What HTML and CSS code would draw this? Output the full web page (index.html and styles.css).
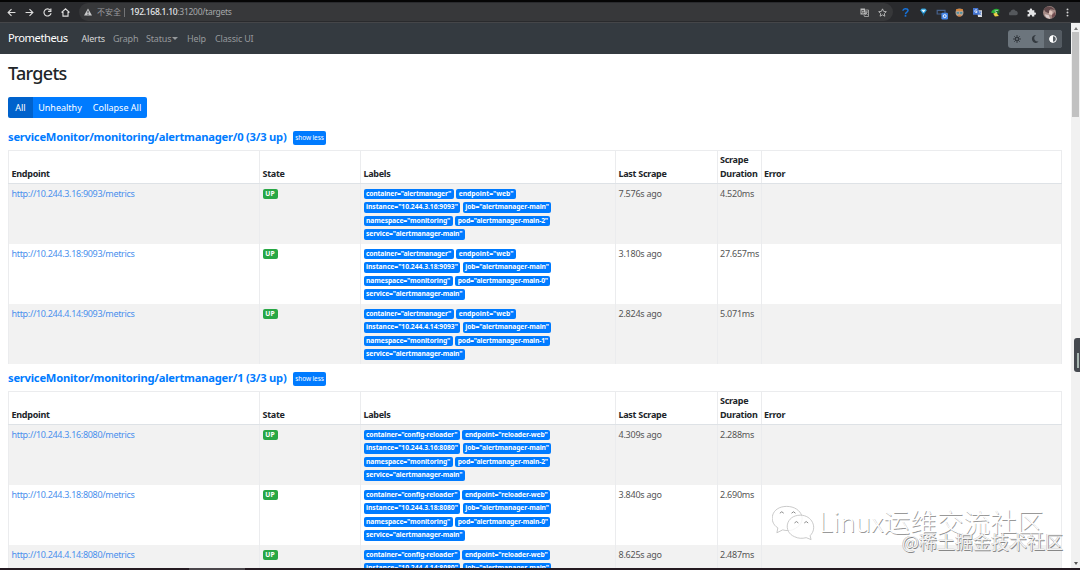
FILE: index.html
```html
<!DOCTYPE html>
<html lang="en">
<head>
<meta charset="utf-8">
<title>Prometheus Targets</title>
<link rel="stylesheet" href="styles.css">
</head>
<body>
<div class="window">
  <header class="browser">
    <svg class="nav-icon" viewBox="0 0 16 16"><path d="M15 8H2M8 2 2 8l6 6"/></svg>
    <svg class="nav-icon" viewBox="0 0 16 16"><path d="M1 8h13M8 2l6 6-6 6"/></svg>
    <svg class="nav-icon" viewBox="0 0 16 16"><path d="M13 4a6.300 6.300 0 1 0 1.300 5M14 1v5H9"/></svg>
    <svg class="nav-icon" viewBox="0 0 16 16"><path d="M1 8 8 1.500 15 8M3.500 7v7.500h9V7"/></svg>
    <div class="address">
      <svg class="warn" viewBox="0 0 16 16"><path fill="#c8c9ca" d="M8 1 16 15H0z"/><path stroke="#3b3c3e" stroke-width="2" d="M8 5.500v5M8 11.700v2"/></svg>
      <span class="insecure">不安全</span><span class="divider"></span>
      <span class="url"><b>192.168.1.10</b>:31200/targets</span>
      <svg class="translate" viewBox="0 0 18 18"><path fill="#bbb" d="M1 1h9l2 12H1z"/><path fill="none" stroke="#444" stroke-width="1.500" d="M8 5H3.500v5H8V8H6"/><path fill="none" stroke="#bbb" stroke-width="1.500" d="M11 4h6v13H9l-1-3M11 8h5M13 7c1 4-1 5-2 6M12 10l3 4"/></svg>
      <svg class="star" viewBox="0 0 16 16"><path d="m8 1.500 2 4.500 4.800.500-3.600 3.300 1 4.800L8 12.200l-4.200 2.400 1-4.800L1.200 6.500 6 6z"/></svg>
    </div>
    <div class="extensions">
      <svg viewBox="0 0 16 16"><path fill="none" stroke="#1673dc" stroke-width="2.600" d="M3.500 5c0-5 9-4.500 9-.500C12.500 7.500 8 7 8 11"/><path fill="#1673dc" d="M6.500 12.500h3v3h-3z"/></svg>
      <svg viewBox="0 0 16 16"><path fill="#269bd8" d="M2 4 5 1h6l3 3-6 8z"/><path fill="#e6f6ff" d="M4 3h8L8 8z"/><path fill="#19618b" d="m6 9 2 6 2-6z"/></svg>
      <svg class="wide" viewBox="0 0 20 20"><path fill="none" stroke="#46618c" stroke-width="2" d="M2 4h13v6H2z"/><rect x="9" y="8" width="11" height="11" rx="2" fill="#4586e8"/><circle cx="14.500" cy="13.500" r="2.500" fill="none" stroke="#fff" stroke-width="1.500"/></svg>
      <svg viewBox="0 0 16 16"><circle cx="8" cy="8" r="7" fill="#b9a08e"/><path fill="#d98536" d="M2 2h12v3H2z"/><path fill="#4d91a4" d="M3 7h4v3H3zM9 7h4v3H9z"/><path fill="#db7d32" d="M5 13h6v2H5z"/></svg>
      <svg viewBox="0 0 16 16"><path fill="#dedfe3" d="M7 4h9v12H9z"/><path fill="#4475d2" d="M0 0h9l3 12H0z"/><path fill="none" stroke="#fff" stroke-width="1.400" d="M7.500 4.500C4-.500 0 9 7 8V6H5"/><path fill="none" stroke="#4475d2" stroke-width="1.400" d="M10 7h5m-2 0c0 3-1 4-2 5m0-3 4 4"/></svg>
      <svg viewBox="0 0 16 16"><path fill="#2aae38" d="M0 8C3 1 10 0 15 3l-4 8z"/><path fill="#e9eef5" d="m6 5 7-1-3 6z"/><path fill="#ead344" d="m4 10 5-2 5 6-7 1z"/><path fill="#176c24" d="m7 6 8-2v6z"/></svg>
      <svg class="cloud" viewBox="0 0 16 16"><path fill="#55585c" d="M3 13a3 3 0 0 1-.500-6C3 2 10 1 11.500 5c5 0 5.500 8 1 8z"/></svg>
      <svg viewBox="0 0 16 16"><path fill="#e4e5e6" d="M1 4h4c-1-4 5-4 4 0h4v4c4-1 4 5 0 4v3H9c0-4-4-4-4 0H1v-4c4 0 4-4 0-4z"/></svg>
      <svg class="avatar" viewBox="0 0 16 16"><circle cx="8" cy="8" r="8" fill="#a78c87"/><path fill="#62494b" d="M1 4C5-2 12 1 15 5L9 4 7 9 3 7z"/><path fill="#e1c6bd" d="m8 5 4 2-1 4-4-1z"/><path fill="#d9cccb" d="m2 10 5 1 2 5-5-2z"/><path fill="#734d50" d="m11 11 4-4v5l-4 3z"/></svg>
      <svg class="dots" viewBox="0 0 16 16"><g fill="#d7d7d7"><circle cx="8" cy="2.500" r="1.700"/><circle cx="8" cy="8" r="1.700"/><circle cx="8" cy="13.500" r="1.700"/></g></svg>
    </div>
  </header>
  <div class="viewport">
    <main class="page">
      <nav class="navbar">
        <a class="brand">Prometheus</a>
        <a class="active">Alerts</a><a class="graph">Graph</a><a class="status">Status<i class="caret"></i></a><a class="help">Help</a><a class="classic">Classic UI</a>
        <div class="themes">
          <span><svg viewBox="0 0 16 16"><path stroke="#343a40" stroke-width="2" d="M8 0v16M0 8h16M2.500 2.500l11 11M13.500 2.500l-11 11"/><circle cx="8" cy="8" r="4.500" fill="#343a40"/><circle cx="8" cy="8" r="2" fill="#6c757d"/></svg></span>
          <span><svg viewBox="0 0 16 16"><path fill="#343a40" d="M10 0C1-.500-1 11 6 15c3 2 7 1 9-2C6 14 4 4 10 0z"/></svg></span>
          <span class="auto"><svg viewBox="0 0 16 16"><circle cx="8" cy="8" r="6.700" fill="none" stroke="#fff" stroke-width="2"/><path fill="#fff" d="M8 1a7 7 0 0 0 0 14z"/></svg></span>
        </div>
      </nav>
      <section class="content">
        <h1>Targets</h1>
        <div class="filters"><button class="all">All</button><button class="unhealthy">Unhealthy</button><button class="collapse">Collapse All</button></div>
        <section class="pool">
          <h2><a>serviceMonitor/monitoring/alertmanager/0 (3/3 up)</a><button>show less</button></h2>
          <table>
            <colgroup><col class="c-endpoint"><col class="c-state"><col class="c-labels"><col class="c-last"><col class="c-duration"><col></colgroup>
            <thead><tr><th>Endpoint</th><th>State</th><th>Labels</th><th>Last Scrape</th><th>Scrape<br>Duration</th><th>Error</th></tr></thead>
            <tbody>
              <tr><td><a>http://10.244.3.16:9093/metrics</a></td><td><span class="up">UP</span></td><td><div class="labels"><div><span>container="alertmanager"</span><span class="short">endpoint="web"</span></div><div><span class="instance">instance="10.244.3.16:9093"</span><span class="job">job="alertmanager-main"</span></div><div><span class="namespace">namespace="monitoring"</span><span>pod="alertmanager-main-2"</span></div><div><span class="service">service="alertmanager-main"</span></div></div></td><td>7.576s ago</td><td>4.520ms</td><td></td></tr>
              <tr><td><a>http://10.244.3.18:9093/metrics</a></td><td><span class="up">UP</span></td><td><div class="labels"><div><span>container="alertmanager"</span><span class="short">endpoint="web"</span></div><div><span class="instance">instance="10.244.3.18:9093"</span><span class="job">job="alertmanager-main"</span></div><div><span class="namespace">namespace="monitoring"</span><span>pod="alertmanager-main-0"</span></div><div><span class="service">service="alertmanager-main"</span></div></div></td><td>3.180s ago</td><td>27.657ms</td><td></td></tr>
              <tr><td><a>http://10.244.4.14:9093/metrics</a></td><td><span class="up">UP</span></td><td><div class="labels"><div><span>container="alertmanager"</span><span class="short">endpoint="web"</span></div><div><span class="instance">instance="10.244.4.14:9093"</span><span class="job">job="alertmanager-main"</span></div><div><span class="namespace">namespace="monitoring"</span><span>pod="alertmanager-main-1"</span></div><div><span class="service">service="alertmanager-main"</span></div></div></td><td>2.824s ago</td><td>5.071ms</td><td></td></tr>
            </tbody>
          </table>
        </section>
        <section class="pool">
          <h2><a>serviceMonitor/monitoring/alertmanager/1 (3/3 up)</a><button>show less</button></h2>
          <table>
            <colgroup><col class="c-endpoint"><col class="c-state"><col class="c-labels"><col class="c-last"><col class="c-duration"><col></colgroup>
            <thead><tr><th>Endpoint</th><th>State</th><th>Labels</th><th>Last Scrape</th><th>Scrape<br>Duration</th><th>Error</th></tr></thead>
            <tbody>
              <tr><td><a>http://10.244.3.16:8080/metrics</a></td><td><span class="up">UP</span></td><td><div class="labels"><div><span class="reloader">container="config-reloader"</span><span class="reloader">endpoint="reloader-web"</span></div><div><span class="instance">instance="10.244.3.16:8080"</span><span class="job">job="alertmanager-main"</span></div><div><span class="namespace">namespace="monitoring"</span><span>pod="alertmanager-main-2"</span></div><div><span class="service">service="alertmanager-main"</span></div></div></td><td>4.309s ago</td><td>2.288ms</td><td></td></tr>
              <tr><td><a>http://10.244.3.18:8080/metrics</a></td><td><span class="up">UP</span></td><td><div class="labels"><div><span class="reloader">container="config-reloader"</span><span class="reloader">endpoint="reloader-web"</span></div><div><span class="instance">instance="10.244.3.18:8080"</span><span class="job">job="alertmanager-main"</span></div><div><span class="namespace">namespace="monitoring"</span><span>pod="alertmanager-main-0"</span></div><div><span class="service">service="alertmanager-main"</span></div></div></td><td>3.840s ago</td><td>2.690ms</td><td></td></tr>
              <tr><td><a>http://10.244.4.14:8080/metrics</a></td><td><span class="up">UP</span></td><td><div class="labels"><div><span class="reloader">container="config-reloader"</span><span class="reloader">endpoint="reloader-web"</span></div><div><span class="instance">instance="10.244.4.14:8080"</span><span class="job">job="alertmanager-main"</span></div></div></td><td>8.625s ago</td><td>2.487ms</td><td></td></tr>
            </tbody>
          </table>
        </section>
      </section>
    </main>
    <aside class="scrollbar"><i class="arrow-up"></i><div class="thumb"></div><i class="arrow-down"></i></aside>
  </div>
  <footer class="taskbar"><span></span></footer>
  <div class="side-handle"><i></i></div>
  <div class="watermark">
    <svg viewBox="0 0 44 36"><g fill="#fff" fill-opacity=".8" stroke="#bbb" stroke-width=".8"><path d="M15 1C-1 1-4 17 6 23l-1 5 6-3c3 1 7 1 10 0C38 18 31 1 15 1z"/><path d="M29 10c-15 0-18 17-6 22 4 2 8 2 12 1l5 2-1-4c8-8 2-21-10-21z"/></g><g fill="none" stroke="#888"><path d="M8 8q2-3 4 0M20 8q2-3 4 0M23 18q2-3 4 0M33 18q2-3 4 0"/></g></svg>
    <span>Linux运维交流社区</span>
  </div>
  <div class="credit">@稀土掘金技术社区</div>
</div>
</body>
</html>
```
FILE: styles.css
```css
* { box-sizing: border-box; }
body { margin: 0; font-family: "Noto Sans", "Noto Sans CJK SC", sans-serif; font-size: 9px; line-height: 13.5px; color: #212529; background: #fff; }
button { font: inherit; color: #fff; border: 0; padding: 0; margin: 0; background: #007bff; }
svg { display: block; flex: none; }
.window { position: relative; width: 1080px; height: 570px; overflow: hidden; display: flex; flex-direction: column; }
.browser { height: 23px; flex: none; display: flex; align-items: center; padding: 0 7px 0; background: #292a2d; border-top: 2px solid #050505; border-bottom: 1px solid #454649; }
.nav-icon { width: 9px; height: 9px; margin-right: 9px; fill: none; stroke: #dedede; stroke-width: 2; }
.address { width: 814px; height: 18px; border-radius: 9px; background: #37383a; display: flex; align-items: center; padding: 0 6px 0 5px; }
.warn { width: 8px; height: 8px; }
.insecure { margin-left: 5px; color: #999b9e; font-size: 8px; width: 24px; white-space: nowrap; }
.divider { width: 1px; height: 9px; background: #737476; margin: 0 5px 0 3px; }
.url { font-size: 8.500px; letter-spacing: -.28px; color: #a6a8aa; flex: 1; white-space: nowrap; }
.url b { color: #e8eaed; font-weight: 500; }
.translate, .star { width: 9px; height: 9px; }
.star { margin-left: 9px; fill: none; stroke: #c5c5c5; stroke-width: 1.5; }
.extensions { display: flex; gap: 9px; align-items: center; margin-left: 8px; }
.extensions svg { width: 9px; height: 9px; }
.extensions .wide { width: 12px; height: 12px; margin: 3px -2px 0 -1px; }
.extensions .avatar { width: 13px; height: 13px; margin: 0 -2px; }
.viewport { flex: 1; min-height: 0; display: flex; }
.page { flex: 1; min-width: 0; overflow: hidden; }
.navbar { height: 31px; background: #343a40; display: flex; align-items: center; padding: 0 9px 0 8px; color: #96999c; letter-spacing: -.18px; }
.navbar a { white-space: nowrap; }
.navbar .brand { font-size: 11.200px; color: #fff; width: 73.500px; letter-spacing: -.45px; margin-top: -2px; }
.navbar .active { color: #d5d6d7; width: 31.500px; }
.graph { width: 33px; }
.status { width: 41px; }
.help { width: 28px; }
.caret { display: inline-block; border: 3px solid transparent; border-top-color: #96999c; border-bottom: 0; margin: 0 0 2px 1px; }
.themes { margin-left: auto; display: flex; height: 18px; border-radius: 3px; overflow: hidden; background: #6c757d; }
.themes span { width: 18px; display: flex; align-items: center; justify-content: center; }
.themes .auto { background: #545b62; }
.themes svg { width: 8px; height: 8px; }
.content { padding: 10px 8px 0; }
h1 { margin: 0 0 15px; font-size: 18px; line-height: 18px; font-weight: 500; letter-spacing: -.7px; }
.filters { display: flex; width: 139px; height: 21px; border-radius: 2px; overflow: hidden; margin-bottom: 8px; letter-spacing: -.15px; }
.filters .all { width: 25px; background: #0062cc; }
.filters .unhealthy { width: 54px; }
.filters .collapse { flex: 1; }
.pool { height: 241px; }
h2 { height: 24px; margin: 0; display: flex; align-items: center; font-size: 11.200px; line-height: 14px; color: #007bff; font-weight: 700; }
h2 a { width: 279px; white-space: nowrap; margin-top: -3px; letter-spacing: -.235px; }
h2 button { margin: -1px 0 0 6px; width: 33px; height: 14px; border-radius: 2px; font-size: 6.500px; line-height: 14px; font-weight: 400; white-space: nowrap; letter-spacing: -.1px; }
table { width: 1054px; table-layout: fixed; border-collapse: collapse; }
.c-endpoint { width: 251px; }
.c-state { width: 101px; }
.c-labels { width: 255px; }
.c-last { width: 101.500px; }
.c-duration { width: 44px; }
th, td { border: 1px solid #ebecee; padding: 3px 2.500px; white-space: nowrap; text-align: left; }
th { height: 33px; vertical-align: bottom; padding: 2px 2.500px 3px; border-bottom-color: #dee2e6; letter-spacing: -.28px; }
td { height: 60px; vertical-align: top; padding: 2.500px 2.500px 0; border-top-color: transparent; border-bottom-color: transparent; color: #555; letter-spacing: -.24px; }
tbody tr:nth-child(odd) { background: #f2f2f2; }
td a { color: #4a90ed; letter-spacing: -.32px; }
.up { display: block; width: 15px; height: 10px; margin-top: 2px; border-radius: 2px; background: #28a745; color: #fff; font-size: 6.750px; line-height: 10px; font-weight: 700; text-align: center; letter-spacing: 0; }
.labels div { display: flex; gap: 2.500px; height: 13.500px; padding-top: 2px; }
.labels span { height: 10.500px; border-radius: 2px; padding: 0 2.500px; background: #007bff; color: #fff; font-size: 6.750px; line-height: 10.500px; font-weight: 700; letter-spacing: -.17px; }
.labels .short { letter-spacing: 0; }
.labels .namespace { letter-spacing: -.1px; }
.labels .instance { letter-spacing: -.04px; }
.labels .job, .labels .service, .labels .reloader { letter-spacing: -.11px; }
.scrollbar { width: 9px; background: #f1f1f1; display: flex; flex-direction: column; align-items: center; padding: 4px 0 3px; }
.scrollbar i { border: 2px solid transparent; }
.scrollbar .arrow-up { border-bottom: 3px solid #777; border-top: 0; }
.scrollbar .arrow-down { border-top: 3px solid #555; border-bottom: 0; margin-top: auto; }
.thumb { width: 7px; height: 85px; margin-top: 2px; background: #c1c1c1; }
.taskbar { height: 2px; flex: none; background: #241a21; padding-left: 189px; }
.taskbar span { display: block; width: 56px; height: 2px; background: #4b474c; }
.side-handle { position: absolute; right: 0; top: 338px; width: 6px; height: 34px; background: #464a50; border-radius: 3px 0 0 3px; padding: 15px 0 0 3px; }
.side-handle i { display: block; width: 2px; height: 15px; background: #a9b8b2; }
.watermark { position: absolute; left: 772px; top: 505px; display: flex; align-items: center; gap: 4px; white-space: nowrap; color: #fff; font: 300 26.700px/36px "Noto Sans CJK SC", sans-serif; text-shadow: .7px .7px 0 #999; }
.watermark span { margin-top: -4px; }
.watermark svg { width: 43px; height: 36px; }
.credit { position: absolute; left: 902px; top: 530px; color: #f4f4f4; font: 18px/22px "Noto Sans CJK SC", sans-serif; white-space: nowrap; text-shadow: .8px .8px 0 #888, -.4px -.4px 0 #aaa; }
```
